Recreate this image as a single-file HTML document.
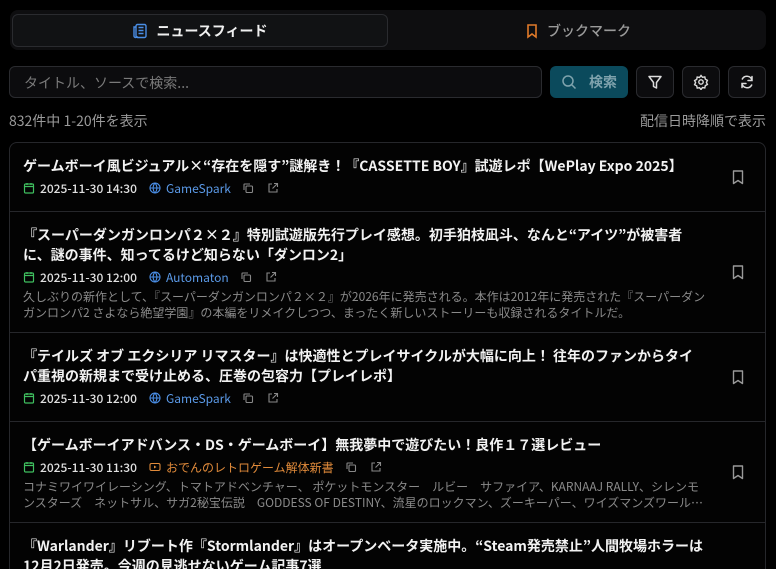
<!DOCTYPE html>
<html><head><meta charset="utf-8"><style>
*{box-sizing:border-box;margin:0;padding:0}
html,body{width:776px;height:569px;overflow:hidden}
body{background:#000;font-family:"Noto Sans CJK JP","Liberation Sans",sans-serif;color:#e8e8e8;position:relative}
.abs{position:absolute}
.tabs{left:10px;top:10px;width:756px;height:40px;background:#0e0e10;border-radius:8px}
.tab{top:14px;height:33px;display:flex;align-items:center;justify-content:center;font-size:14px;font-weight:bold;gap:8px}
.t1{left:12px;width:376px;background:#111214;border:1px solid #2a2b2f;border-radius:6px;color:#f0f0f0}
.t2{left:390px;width:376px;color:#9a9a9a;font-weight:500}
.inp{left:9px;top:66px;width:533px;height:32px;border:1px solid #2a2b2f;border-radius:6px;background:#0c0c0e;color:#7a7a7a;font-size:14px;padding:6px 14px}
.sbtn{left:550px;top:66px;width:78px;height:32px;background:#0b4a5c;border-radius:6px;display:flex;align-items:center;justify-content:center;gap:12px;color:#7fa3ad;font-weight:bold;font-size:14px}
.ib{top:66px;width:38px;height:32px;border:1px solid #2a2b2f;border-radius:6px;background:#0c0c0e;display:flex;align-items:center;justify-content:center}
.cnt{top:111px;font-size:14px;color:#9a9a9a}
.card{left:9px;top:142px;width:757px;height:427px;border:1px solid #26272b;border-bottom:none;border-radius:8px 8px 0 0;background:#030303;overflow:hidden}
.item{position:absolute;left:0;width:755px;border-bottom:1px solid #26272b;padding:13px 60px 0 13px}
.tt{font-size:14px;font-weight:bold;line-height:20px;color:#f2f2f2;width:684px}
.meta{display:flex;align-items:center;height:20px;margin-top:2px;font-size:12px}
.date{color:#e0e0e0;font-weight:500;display:flex;align-items:center;gap:5px}
.src{color:#5b9ae8;display:flex;align-items:center;gap:5px;margin-left:12px}
.org{color:#e08a3a}
.ic{margin-left:11px;display:flex}
.desc{font-size:12px;line-height:16px;color:#8a8a8a;margin-top:2px;white-space:nowrap;overflow:hidden;width:690px}
.bm{position:absolute;right:20px}
</style></head><body>
<div class="abs tabs"></div>
<div class="abs tab t1"><svg width="16" height="16" viewBox="0 0 16 16" fill="none" stroke="#4a8ee6" stroke-width="1.4"><rect x="4" y="1.5" width="10" height="13" rx="1.5"/><path d="M4 4H2v9a1.5 1.5 0 003 0M6.5 4.5h5M6.5 7.5h5M6.5 10.5h5"/></svg>ニュースフィード</div>
<div class="abs tab t2"><svg width="14" height="16" viewBox="0 0 14 16" fill="none" stroke="#e07a2a" stroke-width="1.6"><path d="M3 2h8v12l-4-3-4 3z"/></svg>ブックマーク</div>
<div class="abs inp">タイトル、ソースで検索...</div>
<div class="abs sbtn"><svg width="16" height="16" viewBox="0 0 16 16" fill="none" stroke="#7fa3ad" stroke-width="1.5"><circle cx="7" cy="7" r="5"/><path d="M11 11l3.5 3.5"/></svg>検索</div>
<div class="abs ib" style="left:636px"><svg width="16" height="16" viewBox="0 0 16 16" fill="none" stroke="#ddd" stroke-width="1.5" stroke-linejoin="round"><path d="M2 2.5h12L9.5 8.5V14l-3-1.5v-4z"/></svg></div>
<div class="abs ib" style="left:682px"><svg width="16" height="16" viewBox="0 0 16 16" fill="none" stroke="#ddd" stroke-width="1.4"><circle cx="8" cy="8" r="2.2"/><path d="M8 1.5l1.5 1.8 2.3-.4.5 2.3 2.1 1.1-1 2.1 1 2.1-2.1 1.1-.5 2.3-2.3-.4L8 15.5l-1.5-1.8-2.3.4-.5-2.3-2.1-1.1 1-2.1-1-2.1 2.1-1.1.5-2.3 2.3.4z"/></svg></div>
<div class="abs ib" style="left:728px"><svg width="16" height="16" viewBox="0 0 16 16" fill="none" stroke="#ddd" stroke-width="1.5" stroke-linecap="round"><path d="M13 6.5A5.2 5.2 0 003.3 5M3 9.5A5.2 5.2 0 0012.7 11M13 2.5v4h-4M3 13.5v-4h4"/></svg></div>
<div class="abs cnt" style="left:9px">832件中 1-20件を表示</div>
<div class="abs cnt" style="right:10px">配信日時降順で表示</div>

<svg width="0" height="0" style="position:absolute"><defs>
<symbol id="cal" viewBox="0 0 12 12"><rect x="1.5" y="2" width="9" height="9" rx="1" fill="none" stroke="#3fbf5f" stroke-width="1.2"/><path d="M1.5 4.5h9M4 1v2M8 1v2" stroke="#3fbf5f" stroke-width="1.2"/></symbol>
<symbol id="glb" viewBox="0 0 12 12"><g fill="none" stroke="#4a8ee6" stroke-width="1.1"><circle cx="6" cy="6" r="5"/><path d="M1 6h10M6 1c-2.5 3-2.5 7 0 10M6 1c2.5 3 2.5 7 0 10"/></g></symbol>
<symbol id="cp" viewBox="0 0 12 12"><g fill="none" stroke="#888" stroke-width="1.1"><rect x="4" y="4" width="6.5" height="6.5" rx="1"/><path d="M2 8V2.5A.5.5 0 012.5 2H8"/></g></symbol>
<symbol id="ex" viewBox="0 0 12 12"><g fill="none" stroke="#888" stroke-width="1.1"><path d="M5 2H2v8h8V7M7 1.5h3.5V5M10.5 1.5L5.5 6.5"/></g></symbol>
<symbol id="yt" viewBox="0 0 12 12"><rect x="1" y="2.5" width="10" height="7" rx="1.5" fill="none" stroke="#e08a3a" stroke-width="1.1"/><path d="M5 4.5v3l2.5-1.5z" fill="#e08a3a"/></symbol>
<symbol id="bk" viewBox="0 0 14 16"><path d="M2.5 2h9v12.5L7 11.5l-4.5 3z" fill="none" stroke="#999" stroke-width="1.4" stroke-linejoin="round"/></symbol>
</defs></svg>

<div class="abs card">
<div class="item" style="top:0;height:69px">
<div class="tt">ゲームボーイ風ビジュアル×“存在を隠す”謎解き！『CASSETTE BOY』試遊レポ【WePlay Expo 2025】</div>
<div class="meta"><span class="date"><svg width="12" height="12"><use href="#cal"/></svg>2025-11-30 14:30</span><span class="src"><svg width="12" height="12"><use href="#glb"/></svg>GameSpark</span><span class="ic"><svg width="12" height="12"><use href="#cp"/></svg></span><span class="ic" style="margin-left:13px"><svg width="12" height="12"><use href="#ex"/></svg></span></div>
<svg class="bm" style="top:26px" width="14" height="16"><use href="#bk"/></svg>
</div>
<div class="item" style="top:69px;height:121px">
<div class="tt">『スーパーダンガンロンパ２×２』特別試遊版先行プレイ感想。初手狛枝凪斗、なんと“アイツ”が被害者<br>に、謎の事件、知ってるけど知らない「ダンロン2」</div>
<div class="meta"><span class="date"><svg width="12" height="12"><use href="#cal"/></svg>2025-11-30 12:00</span><span class="src"><svg width="12" height="12"><use href="#glb"/></svg>Automaton</span><span class="ic"><svg width="12" height="12"><use href="#cp"/></svg></span><span class="ic" style="margin-left:13px"><svg width="12" height="12"><use href="#ex"/></svg></span></div>
<div class="desc">久しぶりの新作として、『スーパーダンガンロンパ２×２』が2026年に発売される。本作は2012年に発売された『スーパーダン<br>ガンロンパ2 さよなら絶望学園』の本編をリメイクしつつ、まったく新しいストーリーも収録されるタイトルだ。</div>
<svg class="bm" style="top:52px" width="14" height="16"><use href="#bk"/></svg>
</div>
<div class="item" style="top:190px;height:89px">
<div class="tt">『テイルズ オブ エクシリア リマスター』は快適性とプレイサイクルが大幅に向上！ 往年のファンからタイ<br>パ重視の新規まで受け止める、圧巻の包容力【プレイレポ】</div>
<div class="meta"><span class="date"><svg width="12" height="12"><use href="#cal"/></svg>2025-11-30 12:00</span><span class="src"><svg width="12" height="12"><use href="#glb"/></svg>GameSpark</span><span class="ic"><svg width="12" height="12"><use href="#cp"/></svg></span><span class="ic" style="margin-left:13px"><svg width="12" height="12"><use href="#ex"/></svg></span></div>
<svg class="bm" style="top:36px" width="14" height="16"><use href="#bk"/></svg>
</div>
<div class="item" style="top:279px;height:101px">
<div class="tt">【ゲームボーイアドバンス・DS・ゲームボーイ】無我夢中で遊びたい！良作１７選レビュー</div>
<div class="meta"><span class="date"><svg width="12" height="12"><use href="#cal"/></svg>2025-11-30 11:30</span><span class="src org"><svg width="12" height="12"><use href="#yt"/></svg>おでんのレトロゲーム解体新書</span><span class="ic"><svg width="12" height="12"><use href="#cp"/></svg></span><span class="ic" style="margin-left:13px"><svg width="12" height="12"><use href="#ex"/></svg></span></div>
<div class="desc">コナミワイワイレーシング、トマトアドベンチャー、 ポケットモンスター　ルビー　サファイア、KARNAAJ RALLY、シレンモ<br>ンスターズ　ネットサル、サガ2秘宝伝説　GODDESS OF DESTINY、流星のロックマン、ズーキーパー、ワイズマンズワール…</div>
<svg class="bm" style="top:42px" width="14" height="16"><use href="#bk"/></svg>
</div>
<div class="item" style="top:380px;height:80px;border-bottom:none">
<div class="tt">『Warlander』リブート作『Stormlander』はオープンベータ実施中。“Steam発売禁止”人間牧場ホラーは<br>12月2日発売。今週の見逃せないゲーム記事7選</div>
</div>
</div>
</body></html>
